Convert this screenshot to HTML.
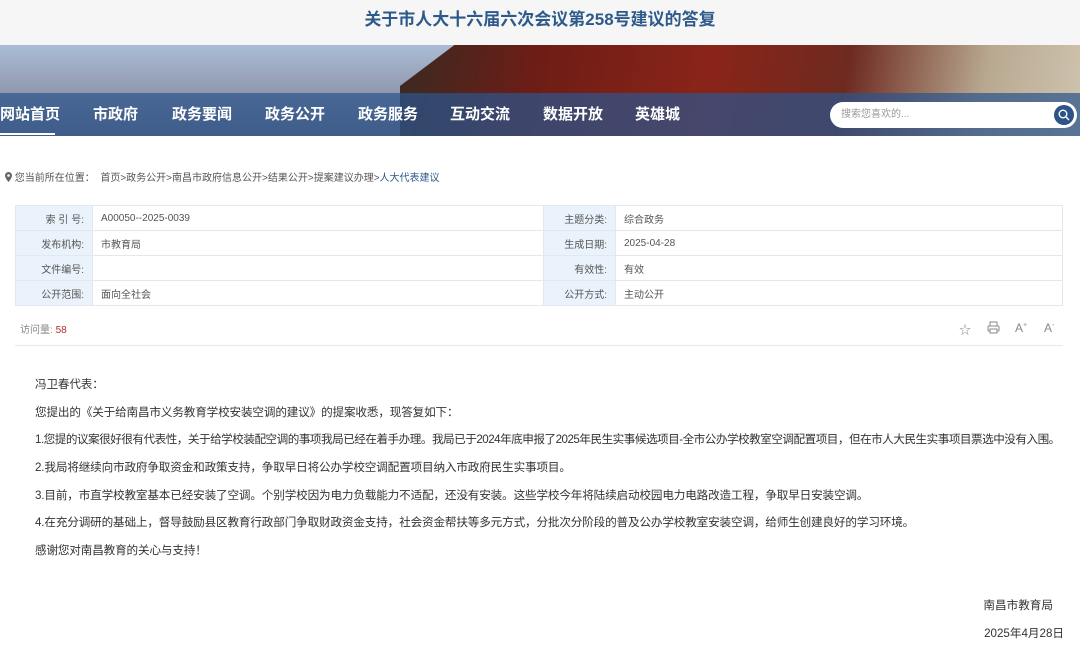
<!DOCTYPE html>
<html><head><meta charset="utf-8"><style>
*{margin:0;padding:0;box-sizing:border-box}
body{width:1080px;height:649px;overflow:hidden;background:#fff;font-family:"Liberation Sans","Noto Sans CJK SC",sans-serif;color:#333;position:relative}
.top{position:absolute;left:0;top:0;width:1080px;height:45px;background:#f6f6f6;text-align:center;line-height:40px;font-size:17px;font-weight:bold;color:#2d5a8a}
.banner{position:absolute;left:0;top:45px;width:1080px;height:91px;background:linear-gradient(180deg,#a9bdd5,#8e93a8 60%,#6e7184);overflow:hidden}
.banner .roof{position:absolute;left:400px;top:0;width:680px;height:91px;background:linear-gradient(100deg,#3a2a22 0%,#6d1d16 20%,#8a2418 45%,#6e2a20 65%,#b8a890 85%,#cfc4b0 100%);clip-path:polygon(0 45%,8% 0,100% 0,100% 100%,0 100%)}
.nav{position:absolute;left:0;top:93px;width:1080px;height:43px;background:rgba(45,85,140,.72)}
.nav span{position:absolute;top:0;line-height:43px;color:#fff;font-size:15px;font-weight:bold}
.nav .act{height:43px}
.nav .act:after{content:"";position:absolute;left:0;bottom:1px;width:55px;height:2px;background:#fff}
.search{position:absolute;left:830px;top:102px;width:247px;height:26px;background:#fff;border-radius:13px}
.search span{position:absolute;left:11px;top:0;line-height:26px;font-size:10px;color:#999}
.search i{position:absolute;right:3px;top:3px;width:20px;height:20px;border-radius:50%;background:#2c5487}
.search svg{position:absolute;right:7px;top:7px}
.crumb{position:absolute;left:5px;top:169px;font-size:10px;color:#555}
table{position:absolute;left:15px;top:205px;width:1048px;border-collapse:collapse;font-size:10px;table-layout:fixed}
td{border:1px solid #e3e8ee;height:25px;padding:0 8px;color:#555;vertical-align:middle}
td.l{background:#eaf3fb;text-align:right}
.visit{position:absolute;left:20px;top:321px;font-size:10px;color:#888}
.visit b{color:#b03030;font-weight:normal}
.ic{position:absolute;top:321px;font-size:12px;color:#888}
.hr{position:absolute;left:15px;top:345px;width:1048px;height:1px;background:#e8e8e8}
.body p{position:absolute;left:35px;font-size:11.6px;color:#333;white-space:nowrap;letter-spacing:-0.15px}
.sig{position:absolute;right:27px;font-size:11.6px;color:#333}
</style></head><body>
<div class="top">关于市人大十六届六次会议第258号建议的答复</div>
<div class="banner"><div class="roof"></div></div>
<div class="nav">
<span class="act" style="left:0">网站首页</span>
<span style="left:93px">市政府</span>
<span style="left:172px">政务要闻</span>
<span style="left:265px">政务公开</span>
<span style="left:358px">政务服务</span>
<span style="left:450px">互动交流</span>
<span style="left:543px">数据开放</span>
<span style="left:635px">英雄城</span>
</div>
<div class="search"><span>搜索您喜欢的...</span><i></i><svg width="12" height="12" viewBox="0 0 12 12"><circle cx="5" cy="5" r="3.8" fill="none" stroke="#fff" stroke-width="1.4"/><path d="M8 8l3 3" stroke="#fff" stroke-width="1.4"/></svg></div>
<div class="crumb"><svg width="7" height="10" viewBox="0 0 7 10" style="vertical-align:-1px"><path d="M3.5 0a3.5 3.5 0 0 0-3.5 3.5C0 6 3.5 10 3.5 10S7 6 7 3.5A3.5 3.5 0 0 0 3.5 0z" fill="#666"/><circle cx="3.5" cy="3.5" r="1.3" fill="#fff"/></svg> 您当前所在位置：&nbsp; 首页&gt;政务公开&gt;南昌市政府信息公开&gt;结果公开&gt;提案建议办理&gt;<span style="color:#2d5a8a">人大代表建议</span></div>
<table>
<colgroup><col style="width:77px"><col style="width:451px"><col style="width:72px"><col></colgroup>
<tr><td class="l">索 引 号:</td><td>A00050--2025-0039</td><td class="l">主题分类:</td><td>综合政务</td></tr>
<tr><td class="l">发布机构:</td><td>市教育局</td><td class="l">生成日期:</td><td>2025-04-28</td></tr>
<tr><td class="l">文件编号:</td><td></td><td class="l">有效性:</td><td>有效</td></tr>
<tr><td class="l">公开范围:</td><td>面向全社会</td><td class="l">公开方式:</td><td>主动公开</td></tr>
</table>
<div class="visit">访问量: <b>58</b></div>
<div class="ic" style="left:959px">☆</div>
<div class="ic" style="left:987px"><svg width="13" height="13" viewBox="0 0 13 13"><rect x="3" y="1" width="7" height="4" fill="none" stroke="#888"/><rect x="1" y="5" width="11" height="5" rx="1" fill="none" stroke="#888"/><rect x="3" y="8" width="7" height="4" fill="#fff" stroke="#888"/></svg></div>
<div class="ic" style="left:1015px">A<sup style="font-size:7px">+</sup></div>
<div class="ic" style="left:1044px">A<sup style="font-size:7px">-</sup></div>
<div class="hr"></div>
<div class="body">
<p style="top:376px">冯卫春代表：</p>
<p style="top:404px">您提出的《关于给南昌市义务教育学校安装空调的建议》的提案收悉，现答复如下：</p>
<p style="top:431px;letter-spacing:-0.5px">1.您提的议案很好很有代表性，关于给学校装配空调的事项我局已经在着手办理。我局已于2024年底申报了2025年民生实事候选项目-全市公办学校教室空调配置项目，但在市人大民生实事项目票选中没有入围。</p>
<p style="top:459px">2.我局将继续向市政府争取资金和政策支持，争取早日将公办学校空调配置项目纳入市政府民生实事项目。</p>
<p style="top:487px">3.目前，市直学校教室基本已经安装了空调。个别学校因为电力负载能力不适配，还没有安装。这些学校今年将陆续启动校园电力电路改造工程，争取早日安装空调。</p>
<p style="top:514px">4.在充分调研的基础上，督导鼓励县区教育行政部门争取财政资金支持，社会资金帮扶等多元方式，分批次分阶段的普及公办学校教室安装空调，给师生创建良好的学习环境。</p>
<p style="top:542px">感谢您对南昌教育的关心与支持！</p>
</div>
<div class="sig" style="top:597px">南昌市教育局</div>
<div class="sig" style="top:625px;right:16px">2025年4月28日</div>
</body></html>
